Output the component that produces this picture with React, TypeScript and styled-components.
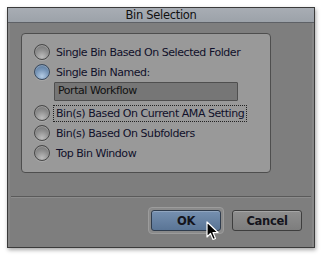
import React from 'react';
import styled, { createGlobalStyle, css } from 'styled-components';

const GlobalStyle = createGlobalStyle`
  html, body {
    margin: 0;
    padding: 0;
    background: #ffffff;
  }
  body {
    font-family: "DejaVu Sans", "Liberation Sans", sans-serif;
  }
`;

const Page = styled.div`
  width: 322px;
  height: 255px;
  padding: 7px;
  box-sizing: border-box;
  position: relative;
`;

const Dialog = styled.div`
  width: 308px;
  height: 241px;
  box-sizing: border-box;
  border: 1px solid #3b3b3b;
  background: #7e7e7e;
  display: flex;
  flex-direction: column;
  box-shadow: 1px 2px 4px rgba(0, 0, 0, 0.35);
`;

const TitleBar = styled.div`
  height: 14px;
  background: linear-gradient(#a8adb4, #9ca2a9);
  border-bottom: 1px solid #5e6166;
  display: flex;
  align-items: center;
  justify-content: center;
  font-size: 11.5px;
  letter-spacing: -0.3px;
  color: #111;
  line-height: 14px;
`;

const Body = styled.div`
  flex: 1;
  display: flex;
  flex-direction: column;
  padding: 10px 3px 0 3px;
  box-shadow: inset 2px 0 0 rgba(255, 255, 255, 0.07), inset -2px 0 0 rgba(255, 255, 255, 0.07);
`;

const GroupBox = styled.div`
  margin-left: 10px;
  width: 250px;
  height: 140px;
  box-sizing: border-box;
  border: 1px solid #4e4e4e;
  border-radius: 4px;
  background: #999999;
  padding: 8px 0 0 12px;
  display: flex;
  flex-direction: column;
`;

const Row = styled.div`
  height: 20px;
  display: flex;
  align-items: center;
  gap: 3px;
`;

const Radio = styled.span<{ checked?: boolean }>`
  width: 16px;
  height: 16px;
  box-sizing: border-box;
  border-radius: 50%;
  border: 1px solid #484848;
  flex-shrink: 0;
  ${p =>
    p.checked
      ? css`
          background: radial-gradient(circle at 50% 80%, #b3cbe4 0%, #7896b8 50%, #4d6c90 100%);
          border-color: #3a4a5e;
        `
      : css`
          background: radial-gradient(circle at 50% 85%, #bcbcbc 0%, #909090 50%, #6c6c6c 100%);
        `}
  box-shadow: inset 0 1px 1px rgba(255, 255, 255, 0.3), 0 1px 0 rgba(255, 255, 255, 0.15);
`;

const Label = styled.span<{ focused?: boolean }>`
  font-size: 11px;
  color: #10102a;
  padding: 1px 2px;
  border: 1px dotted ${p => (p.focused ? '#222' : 'transparent')};
  white-space: nowrap;
  letter-spacing: -0.45px;
`;

const NameField = styled.div`
  margin-left: 20px;
  width: 184px;
  height: 19px;
  box-sizing: border-box;
  border: 1px solid #4f4f4f;
  border-radius: 1px;
  background: #767676;
  font-size: 11px;
  letter-spacing: -0.45px;
  color: #111;
  padding: 0 3px;
  line-height: 16px;
  margin-bottom: 2px;
`;

const Separator = styled.div`
  margin: 23px 0 0 0;
  height: 0;
  border-top: 1px solid #5a5a5a;
  border-bottom: 1px solid #8c8c8c;
`;

const ButtonRow = styled.div`
  display: flex;
  justify-content: flex-end;
  align-items: center;
  gap: 8px;
  padding: 9px 9px 0 0;
`;

const FocusRing = styled.div`
  padding: 2px;
  border-radius: 4px;
  border: 1px solid #9c9c9c;
  background: #8a8a8a;
  display: flex;
`;

const Button = styled.button<{ primary?: boolean }>`
  width: 70px;
  height: 21px;
  box-sizing: border-box;
  border-radius: 3px;
  font-family: "DejaVu Sans", "Liberation Sans", sans-serif;
  font-size: 11.5px;
  font-weight: bold;
  letter-spacing: -0.3px;
  color: #14141c;
  padding: 0;
  border: 1px solid ${p => (p.primary ? '#2f3c4d' : '#3e3e3e')};
  background: ${p =>
    p.primary
      ? 'linear-gradient(#7690b0, #5a7596)'
      : 'linear-gradient(#8f8f8f, #7d7d7d)'};
  box-shadow: inset 0 1px 0 rgba(255, 255, 255, 0.2);
`;

const Cursor = styled.svg`
  position: absolute;
  left: 206px;
  top: 221px;
`;

const options = [
  'Single Bin Based On Selected Folder',
  'Single Bin Named:',
];

const moreOptions = [
  'Bin(s) Based On Current AMA Setting',
  'Bin(s) Based On Subfolders',
  'Top Bin Window',
];

export default function App() {
  return (
    <>
      <GlobalStyle />
      <Page>
        <Dialog>
          <TitleBar>Bin Selection</TitleBar>
          <Body>
            <GroupBox>
              {options.map((o, i) => (
                <Row key={o}>
                  <Radio checked={i === 1} />
                  <Label>{o}</Label>
                </Row>
              ))}
              <NameField>Portal Workflow</NameField>
              {moreOptions.map((o, i) => (
                <Row key={o}>
                  <Radio />
                  <Label focused={i === 0}>{o}</Label>
                </Row>
              ))}
            </GroupBox>
            <Separator />
            <ButtonRow>
              <FocusRing>
                <Button primary>OK</Button>
              </FocusRing>
              <Button>Cancel</Button>
            </ButtonRow>
          </Body>
        </Dialog>
        <Cursor width="13" height="20" viewBox="0 0 13 20">
          <path d="M1 1 L1 16 L4.5 12.5 L7 18.5 L9.5 17.5 L7 11.5 L12 11.5 Z" fill="#000" stroke="#fff" strokeWidth="1.2" strokeLinejoin="round" />
        </Cursor>
      </Page>
    </>
  );
}
